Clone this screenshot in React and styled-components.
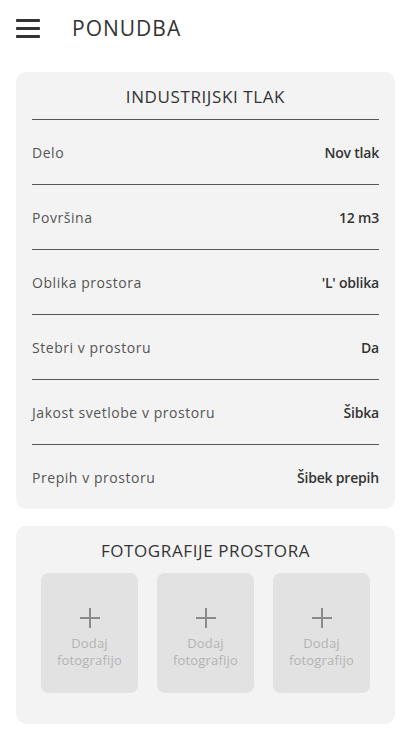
import styled, { createGlobalStyle } from 'styled-components';

const GlobalStyle = createGlobalStyle`
   body {
      margin: 0;
      background: #fff;
      font-family: "Open Sans", "Liberation Sans", sans-serif;
      color: #333;
   }
`;

const Page = styled.div`
   width: 411px;
   padding: 0 16px 16px;
   box-sizing: border-box;
`;

const Header = styled.header`
   display: flex;
   align-items: center;
   height: 56px;
   gap: 32px;
`;

const Burger = styled.div`
   display: flex;
   flex-direction: column;
   gap: 5px;
   width: 24px;

   span {
      display: block;
      height: 3px;
      background: #333;
      border-radius: 1px;
   }
`;

const Title = styled.h1`
   margin: 0;
   font-size: 21px;
   font-weight: 400;
   letter-spacing: 1px;
   color: #333;
`;

const Card = styled.section`
   background: #f3f3f3;
   border-radius: 10px;
   margin-top: ${(p) => p.top}px;
   padding: ${(p) => p.pad};
`;

const CardTitle = styled.h2`
   margin: 0;
   text-align: center;
   font-size: 17px;
   font-weight: 400;
   letter-spacing: 0.6px;
   color: #333;
   line-height: 22px;
`;

const Head = styled.div`
   padding: 14px 16px 11px;
`;

const Rule = styled.div`
   height: 1px;
   margin: 0 16px;
   background: #555;
`;

const Row = styled.div`
   display: flex;
   justify-content: space-between;
   align-items: center;
   height: 64px;
   padding: 0 16px;
   font-size: 14px;
`;

const Label = styled.span`
   color: #555;
   letter-spacing: 0.55px;
`;

const Value = styled.span`
   color: #333;
   font-weight: 600;
   letter-spacing: -0.2px;
`;

const Tiles = styled.div`
   display: flex;
   justify-content: center;
   gap: 19px;
   margin-top: 11px;
`;

const Tile = styled.div`
   width: 97px;
   height: 120px;
   border-radius: 8px;
   background: #e2e2e2;
   display: flex;
   flex-direction: column;
   align-items: center;
   padding-top: 34px;
   box-sizing: border-box;
`;

const TileText = styled.div`
   margin-top: 6px;
   font-size: 13px;
   line-height: 17px;
   letter-spacing: 0.2px;
   color: #b4b4b4;
   text-align: center;
`;

const Plus = () => (
   <svg width="22" height="22" viewBox="0 0 22 22">
      <path d="M11 1v20M1 11h20" stroke="#8a8a8a" strokeWidth="2" fill="none" />
   </svg>
);

const rows = [
   ['Delo', 'Nov tlak'],
   ['Površina', '12 m3'],
   ['Oblika prostora', "'L' oblika"],
   ['Stebri v prostoru', 'Da'],
   ['Jakost svetlobe v prostoru', 'Šibka'],
   ['Prepih v prostoru', 'Šibek prepih'],
];

const App = () => {
   return (
      <Page>
         <GlobalStyle />
         <Header>
            <Burger>
               <span />
               <span />
               <span />
            </Burger>
            <Title>PONUDBA</Title>
         </Header>
         <Card top={16} pad="0">
            <Head>
               <CardTitle>INDUSTRIJSKI TLAK</CardTitle>
            </Head>
            {rows.map(([label, value]) => (
               <div key={label}>
                  <Rule />
                  <Row>
                     <Label>{label}</Label>
                     <Value>{value}</Value>
                  </Row>
               </div>
            ))}
         </Card>
         <Card top={17} pad="14px 0 31px">
            <CardTitle>FOTOGRAFIJE PROSTORA</CardTitle>
            <Tiles>
               {[0, 1, 2].map((n) => (
                  <Tile key={n}>
                     <Plus />
                     <TileText>
                        Dodaj
                        <br />
                        fotografijo
                     </TileText>
                  </Tile>
               ))}
            </Tiles>
         </Card>
      </Page>
   );
};

export default App;
